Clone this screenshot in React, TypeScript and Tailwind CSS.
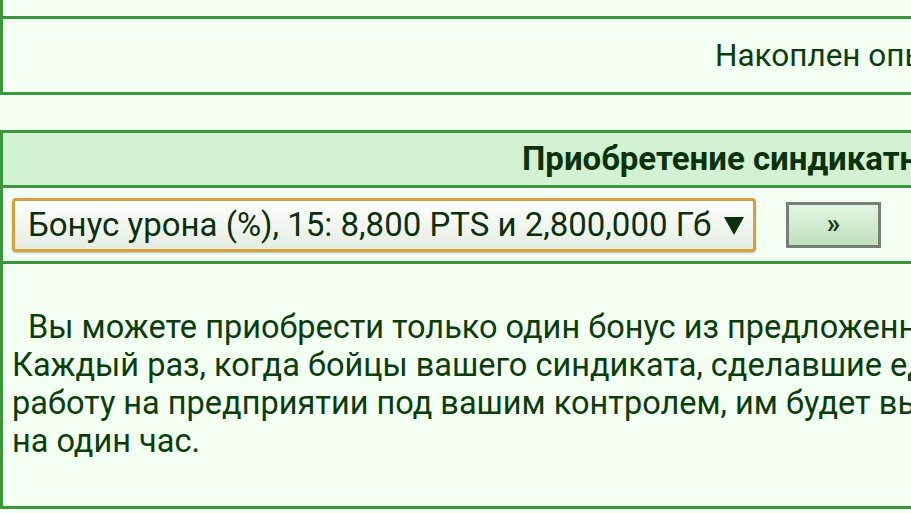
import React from "react";

const font = { fontFamily: "Roboto, 'Noto Sans', sans-serif" };

export default function App() {
  return (
    <div
      className="w-[911px] h-[513px] overflow-hidden bg-[#f2fff2] text-[#0b3d0b] relative"
      style={font}
    >
      <div className="w-[1400px]">
        {/* experience table, scrolled so only its last row shows */}
        <div className="border-l-[3px] border-[#3c963c] mt-[-19px]">
          <div className="h-[38px] border-b-[3px] border-[#3c963c]" />
          <div className="h-[76px] border-b-[3px] border-[#3c963c] flex items-center pl-[712px] text-[31.5px]">
            Накоплен опыт синдиката
          </div>
        </div>

        {/* syndicate bonus purchase table */}
        <div className="mt-[35px] border-l-[3px] border-t-[3px] border-b-[3px] border-[#3c963c]">
          <div className="h-[55px] bg-[#d3f1d3] border-b-[3px] border-[#3c963c] flex items-center pl-[519px] text-[33px] font-bold text-[#0a330a]">
            Приобретение синдикатных бонусов
          </div>
          <div className="h-[76px] border-b-[3px] border-[#3c963c] flex items-center pl-[9px]">
            <div className="w-[744px] h-[54px] rounded-[4px] border-[3px] border-[#d6a03c] bg-gradient-to-b from-[#ffffff] to-[#e4ece2] flex items-center pl-[13px] text-[33px] text-[#0b300b] shadow-[0_1px_2px_rgba(0,0,0,0.25)]">
              <span className="whitespace-nowrap">Бонус урона (%), 15: 8,800 PTS и 2,800,000 Гб</span>
              <svg className="ml-[13px] mt-[2px]" width="20" height="18" viewBox="0 0 20 18">
                <polygon points="0,0 20,0 10,18" fill="#0b300b" />
              </svg>
            </div>
            <div className="ml-[30px] w-[95px] h-[46px] border-[3px] border-[#777d77] bg-gradient-to-b from-[#e2f4e2] to-[#bfe0bf] flex items-center justify-center text-[27px] font-bold text-[#0f3f0f]">
              »
            </div>
          </div>
          <div className="h-[242px] pt-[44px] pl-[9px] text-[32.5px] leading-[38px] whitespace-nowrap">
            <div className="pl-[16px]">Вы можете приобрести только один бонус из предложенных.</div>
            <div>Каждый раз, когда бойцы вашего синдиката, сделавшие единовременную</div>
            <div>работу на предприятии под вашим контролем, им будет выдан бонус</div>
            <div>на один час.</div>
          </div>
        </div>
      </div>
    </div>
  );
}
